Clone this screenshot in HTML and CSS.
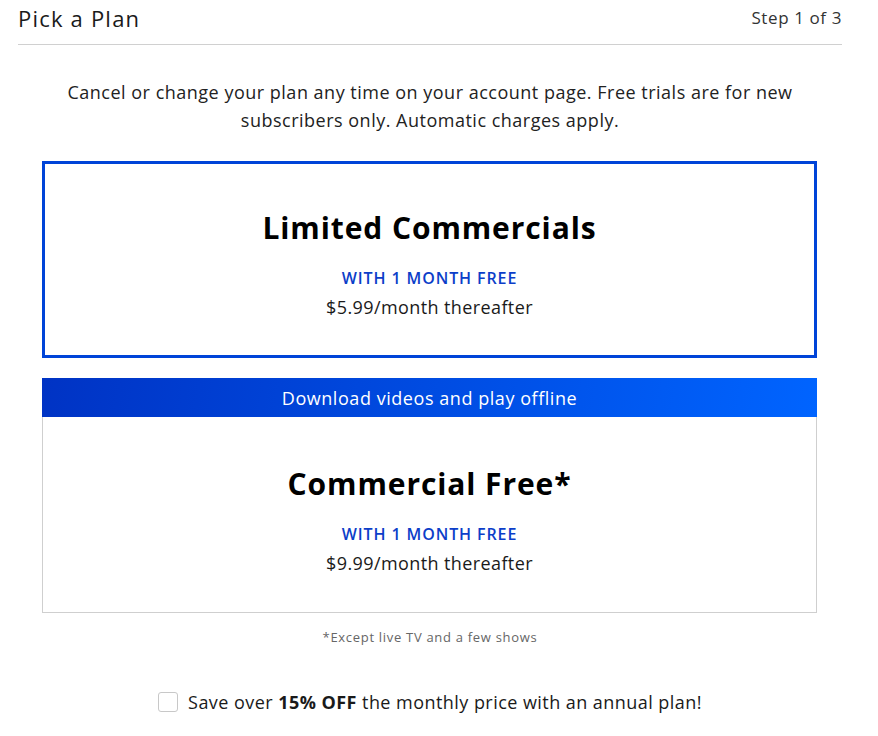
FILE: index.html
```html
<!DOCTYPE html>
<html>
<head>
<meta charset="utf-8">
<link rel="stylesheet" href="styles.css">
</head>
<body>
<div class="page">
  <header class="head">
    <h1 class="head-title">Pick a Plan</h1>
    <div class="head-step">Step 1 of 3</div>
  </header>
  <p class="intro">Cancel or change your plan any time on your account page. Free trials are for new subscribers only. Automatic charges apply.</p>
  <div class="plans">
    <div class="plan plan-selected">
      <h2 class="plan-name">Limited Commercials</h2>
      <div class="plan-trial">WITH 1 MONTH FREE</div>
      <div class="plan-price">$5.99/month thereafter</div>
    </div>
    <div class="plan-group">
      <div class="banner">Download videos and play offline</div>
      <div class="plan plan-plain">
        <h2 class="plan-name">Commercial Free*</h2>
        <div class="plan-trial">WITH 1 MONTH FREE</div>
        <div class="plan-price">$9.99/month thereafter</div>
      </div>
    </div>
  </div>
  <p class="footnote">*Except live TV and a few shows</p>
  <label class="annual">
    <span class="box"></span>
    <span>Save over <b>15% OFF</b> the monthly price with an annual plan!</span>
  </label>
</div>
</body>
</html>
```
FILE: styles.css
```css
* { box-sizing: border-box; }
body {
  margin: 0;
  background: #fff;
  font-family: "Open Sans", "Lato", sans-serif;
  color: #1a1a1a;
}
.page {
  width: 824px;
  margin-left: 18px;
}
.head {
  display: flex;
  justify-content: space-between;
  align-items: center;
  height: 45px;
  border-bottom: 1px solid #d0d0d0;
  padding-bottom: 8px;
}
.head-title {
  margin: 0;
  font-size: 22px;
  font-weight: 400;
  color: #1a1a1a;
  line-height: 28px;
  letter-spacing: 1.2px;
}
.head-step {
  font-size: 17px;
  color: #333;
  line-height: 24px;
  letter-spacing: 0.6px;
}
.intro {
  margin: 33px 20px 0;
  text-align: center;
  font-size: 18px;
  line-height: 28px;
  color: #222;
  letter-spacing: 0.5px;
}
.plans {
  margin: 27px 25px 0 24px;
  display: flex;
  flex-direction: column;
  gap: 20px;
}
.plan {
  display: flex;
  flex-direction: column;
  align-items: center;
  height: 197px;
  padding-top: 44px;
}
.plan-selected {
  border: 3px solid #0044d8;
}
.plan-plain {
  border: 1px solid #cfcfcf;
  border-top: none;
  height: 196px;
  padding-top: 47px;
}
.plan-name {
  margin: 0;
  font-size: 30px;
  font-weight: 700;
  color: #000;
  line-height: 40px;
  letter-spacing: 0.9px;
}
.plan-trial {
  margin-top: 20px;
  font-size: 16px;
  font-weight: 600;
  color: #0c3ec9;
  line-height: 20px;
  letter-spacing: 0.9px;
}
.plan-price {
  margin-top: 9px;
  font-size: 18px;
  color: #1a1a1a;
  line-height: 20px;
  letter-spacing: 0.4px;
}
.banner {
  height: 39px;
  display: flex;
  align-items: center;
  justify-content: center;
  background: linear-gradient(100deg, #0033c4 0%, #0064ff 100%);
  color: #fff;
  font-size: 18px;
  letter-spacing: 0.55px;
}
.footnote {
  margin: 15px 0 0;
  text-align: center;
  font-size: 13px;
  color: #666;
  line-height: 18px;
  letter-spacing: 0.7px;
}
.annual {
  margin-top: 44px;
  display: flex;
  align-items: center;
  justify-content: center;
  gap: 10px;
  font-size: 18px;
  color: #1a1a1a;
  line-height: 24px;
  letter-spacing: 0.45px;
}
.box {
  width: 20px;
  height: 20px;
  border: 1px solid #c8c8c8;
  border-radius: 3px;
}
.annual b { font-weight: 700; }
```
